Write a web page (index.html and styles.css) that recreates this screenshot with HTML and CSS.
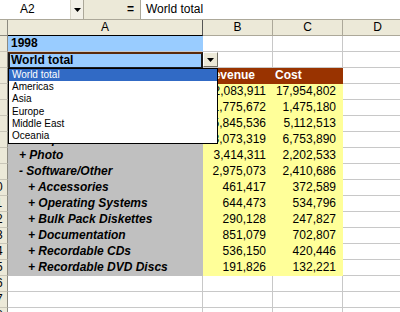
FILE: index.html
```html
<!DOCTYPE html>
<html>
<head>
<meta charset="utf-8">
<link rel="stylesheet" href="styles.css">
</head>
<body>
<div class="fbar">
  <div class="namebox">
    <span class="nb-text">A2</span>
    <span class="nb-btn"><svg width="7" height="4" viewBox="0 0 7 4"><polygon points="0,0 7,0 3.5,4" fill="#000"/></svg></span>
  </div>
  <div class="eq">=</div>
  <div class="fx">World total</div>
</div>
<div class="sheet">
  <div class="row hdr">
    <div class="rh"></div><div class="ch sel">A</div><div class="ch">B</div><div class="ch">C</div><div class="ch">D</div>
  </div>
  <div class="row"><div class="rh"><span>1</span></div><div class="c blue">1998</div><div class="c"></div><div class="c"></div><div class="c"></div></div>
  <div class="row"><div class="rh"><span>2</span></div><div class="c blue active">World total</div><div class="c btncell"><span class="pbtn"><svg width="7" height="4" viewBox="0 0 7 4"><polygon points="0,0 7,0 3.5,4" fill="#000"/></svg></span></div><div class="c"></div><div class="c"></div></div>
  <div class="row"><div class="rh"><span>3</span></div><div class="c h"></div><div class="c h">Revenue</div><div class="c h">Cost</div><div class="c"></div></div>
  <div class="row"><div class="rh"><span>4</span></div><div class="c g l0"></div><div class="c y">22,083,911</div><div class="c y">17,954,802</div><div class="c"></div></div>
  <div class="row"><div class="rh"><span>5</span></div><div class="c g l1"></div><div class="c y">1,775,672</div><div class="c y">1,475,180</div><div class="c"></div></div>
  <div class="row"><div class="rh"><span>6</span></div><div class="c g l1"></div><div class="c y">5,845,536</div><div class="c y">5,112,513</div><div class="c"></div></div>
  <div class="row"><div class="rh"><span>7</span></div><div class="c g l1">+ Peripherals and Accessories</div><div class="c y">8,073,319</div><div class="c y">6,753,890</div><div class="c"></div></div>
  <div class="row"><div class="rh"><span>8</span></div><div class="c g l1">+ Photo</div><div class="c y">3,414,311</div><div class="c y">2,202,533</div><div class="c"></div></div>
  <div class="row"><div class="rh"><span>9</span></div><div class="c g l1">- Software/Other</div><div class="c y">2,975,073</div><div class="c y">2,410,686</div><div class="c"></div></div>
  <div class="row"><div class="rh"><span>10</span></div><div class="c g l2">+ Accessories</div><div class="c y">461,417</div><div class="c y">372,589</div><div class="c"></div></div>
  <div class="row"><div class="rh"><span>11</span></div><div class="c g l2">+ Operating Systems</div><div class="c y">644,473</div><div class="c y">534,796</div><div class="c"></div></div>
  <div class="row"><div class="rh"><span>12</span></div><div class="c g l2">+ Bulk Pack Diskettes</div><div class="c y">290,128</div><div class="c y">247,827</div><div class="c"></div></div>
  <div class="row"><div class="rh"><span>13</span></div><div class="c g l2">+ Documentation</div><div class="c y">851,079</div><div class="c y">702,807</div><div class="c"></div></div>
  <div class="row"><div class="rh"><span>14</span></div><div class="c g l2">+ Recordable CDs</div><div class="c y">536,150</div><div class="c y">420,446</div><div class="c"></div></div>
  <div class="row"><div class="rh"><span>15</span></div><div class="c g l2">+ Recordable DVD Discs</div><div class="c y">191,826</div><div class="c y">132,221</div><div class="c"></div></div>
  <div class="row"><div class="rh"><span>16</span></div><div class="c"></div><div class="c"></div><div class="c"></div><div class="c"></div></div>
  <div class="row"><div class="rh"><span>17</span></div><div class="c"></div><div class="c"></div><div class="c"></div><div class="c"></div></div>
  <div class="row"><div class="rh"><span>18</span></div><div class="c"></div><div class="c"></div><div class="c"></div><div class="c"></div></div>

  <ul class="dd">
    <li class="on">World total</li>
    <li>Americas</li>
    <li>Asia</li>
    <li>Europe</li>
    <li>Middle East</li>
    <li>Oceania</li>
  </ul>
</div>
</body>
</html>
```

FILE: styles.css
```css
* { box-sizing: border-box; margin: 0; padding: 0; }
html, body { width: 400px; height: 312px; overflow: hidden; background: #fff; }
body { font-family: "Liberation Sans", Arial, sans-serif; font-size: 12px; color: #000; }

.fbar { display: flex; height: 20px; background: #ece9d8; border-bottom: 1px solid #aca899; }
.namebox { display: flex; width: 84px; background: #fff; border-right: 1px solid #aca899; }
.nb-text { flex: 1; padding-left: 20px; line-height: 19px; }
.nb-btn { width: 13px; display: flex; align-items: center; justify-content: center; background: #f3f1e8; border-left: 1px solid #d8d5c8; }
.eq { width: 56px; text-align: right; padding-right: 6px; line-height: 19px; font-weight: bold; }
.fx { flex: 1; background: #fff; padding-left: 5px; line-height: 19px; border-left: 1px solid #aca899; }

.sheet { position: relative; }
.row { display: grid; grid-template-columns: 8px 195px 70px 70px 70px; height: 16px; }

.rh { background: #ece9d8; border-right: 1px solid #8c8a80; border-bottom: 1px solid #c9c6b8; overflow: hidden; display: flex; justify-content: flex-end; }
.rh span { flex: 0 0 22px; text-align: center; line-height: 15px; }

.hdr .rh { border-bottom: 1px solid #8c8a80; }
.ch { background: #ece9d8; border-right: 1px solid #aca899; border-bottom: 1px solid #aca899; text-align: center; line-height: 15px; }
.ch.sel { border-bottom: 1px solid #000; border-right: 1px solid #555; }

.c { border-right: 1px solid #c8c8c8; border-bottom: 1px solid #c8c8c8; line-height: 15px; white-space: nowrap; overflow: hidden; }

.blue { background: #99ccff; font-weight: bold; padding-left: 3px; border-right-color: #99ccff; }
.active { border-top: 2px solid #5a2a0a; border-left: 2px solid #1a1a1a; border-right: 2px solid #1a1a1a; border-bottom: 1px solid #1a1a1a; padding-left: 1px; line-height: 13px; }
.btncell { display: flex; }
.pbtn { width: 15px; height: 15px; display: flex; align-items: center; justify-content: center; background: #ece9d8; border: 1px solid; border-color: #fff #716f64 #716f64 #fff; }

.h { background: #993300; color: #fff; font-weight: bold; padding-left: 2px; border-color: #993300; }
.g { background: #c0c0c0; font-weight: bold; font-style: italic; border-color: #c0c0c0; }
.y { background: #ffff99; text-align: right; padding-right: 6px; border-color: #ffff99; }
.l0 { padding-left: 3px; }
.l1 { padding-left: 11px; }
.l2 { padding-left: 20px; }

.dd { position: absolute; left: 8px; top: 48px; width: 210px; height: 76px; background: #fff; border: 1px solid #000; list-style: none; font-size: 10px; }
.dd li { height: 12.2px; line-height: 12.2px; padding-left: 3px; }
.dd li.on { background: #316ac5; color: #fff; }
```
